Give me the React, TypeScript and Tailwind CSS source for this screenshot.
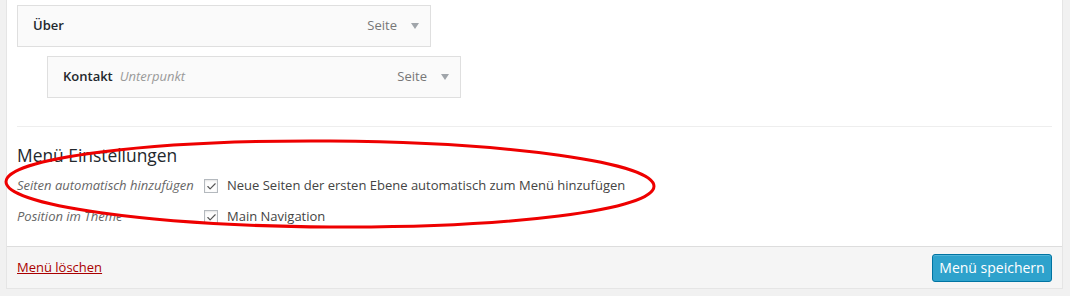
import { Check } from "lucide-react";

const FONT = "font-['Open_Sans','Noto_Sans',sans-serif]";

function Arrow() {
  return (
    <svg width="8" height="6" viewBox="0 0 8 6" className="ml-[14px]">
      <polygon points="0,0 8,0 4,6" fill="#a0a5aa" />
    </svg>
  );
}

function MenuItem({ title, sub }: { title: string; sub?: string }) {
  return (
    <div className="flex h-[42px] w-[414px] items-center border border-[#dfdfdf] bg-[#fafafa] pb-px pl-[15px] pr-[11px]">
      <span className="text-[13px] font-semibold text-[#23282d]">{title}</span>
      {sub && (
        <span className="ml-[7px] text-[13px] italic text-[#999]">{sub}</span>
      )}
      <span className="ml-auto text-[13px] text-[#777]">Seite</span>
      <Arrow />
    </div>
  );
}

function CheckRow({ label, text }: { label: string; text: string }) {
  return (
    <div className="flex h-[24px] items-center">
      <span className="w-[187px] text-[13px] italic text-[#666]">{label}</span>
      <span className="flex h-[14px] w-[14px] items-center justify-center border border-[#b4b9be] bg-[#fdfdfd] shadow-[inset_0_1px_2px_rgba(0,0,0,0.1)]">
        <Check size={11} strokeWidth={2.5} className="text-[#555]" />
      </span>
      <span className="ml-[9px] text-[13px] text-[#444]">{text}</span>
    </div>
  );
}

export default function App() {
  return (
    <div
      className={`relative flex h-[296px] w-[1070px] overflow-hidden bg-[#f1f1f1] pl-[6px] pr-[7px] ${FONT}`}
    >
      <div className="flex h-[289px] flex-1 flex-col border-x border-b border-[#e5e5e5] bg-white">
        <div className="flex-1 px-[10px]">
          <div className="mt-[5px]">
            <MenuItem title="Über" />
          </div>
          <div className="ml-[30px] mt-[9px]">
            <MenuItem title="Kontakt" sub="Unterpunkt" />
          </div>
          <div className="mt-[28px] h-px bg-[#eeeeee]" />
          <h3 className="mt-[16px] h-[24px] text-[17.4px] font-[500] leading-[24px] text-[#23282d]">
            Menü Einstellungen
          </h3>
          <div className="mt-[7px]">
            <CheckRow
              label="Seiten automatisch hinzufügen"
              text="Neue Seiten der ersten Ebene automatisch zum Menü hinzufügen"
            />
          </div>
          <div className="mt-[7px]">
            <CheckRow label="Position im Theme" text="Main Navigation" />
          </div>
        </div>
        <div className="flex h-[42px] items-center border-t border-[#dddddd] bg-[#f5f5f5] px-[10px]">
          <a className="text-[13px] text-[#a00] underline decoration-[#a00]">
            Menü löschen
          </a>
          <button className="ml-auto h-[28px] w-[120px] rounded-[3px] border border-[#0074a2] bg-[#2ea2cc] text-[14px] text-white shadow-[inset_0_1px_0_rgba(120,200,230,0.5)]">
            Menü speichern
          </button>
        </div>
      </div>
      <svg
        className="pointer-events-none absolute left-0 top-0"
        width="1070"
        height="296"
      >
        <ellipse
          cx="330"
          cy="184"
          rx="324"
          ry="43"
          fill="none"
          stroke="#ee0000"
          strokeWidth="3"
          transform="rotate(0.4 330 184)"
        />
      </svg>
    </div>
  );
}
